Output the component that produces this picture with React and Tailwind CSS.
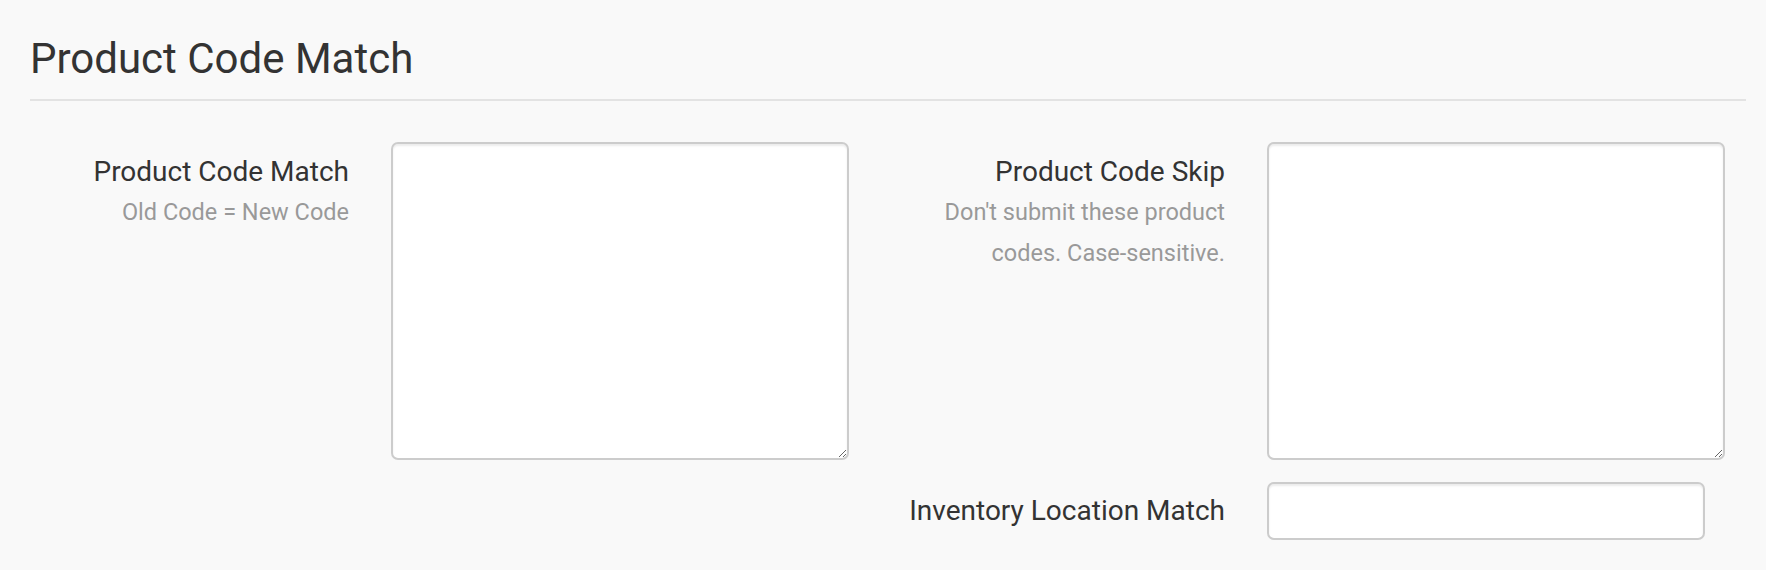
import React from "react";

const font = { fontFamily: "Roboto, 'Noto Sans', sans-serif" };

const fieldBox =
  "block bg-white border-2 border-[#cccccc] rounded-[7px] shadow-[inset_0_2px_2px_rgba(0,0,0,0.075)] outline-none";

const App = () => {
  return (
    <div className="min-h-screen bg-[#f9f9f9] pl-[30px] pr-[20px] pt-[36px] text-[#333333]" style={font}>
      {/* section header */}
      <div className="border-b-2 border-[#e3e3e3] pb-[17px]">
        <h2 className="text-[42px] leading-[46px] font-normal text-[#333333]">Product Code Match</h2>
      </div>

      <div className="flex mt-[41px]">
        {/* left group */}
        <div className="w-[319px] text-right pt-[10px]">
          <div className="text-[28px] leading-[40px] text-[#333333]">Product Code Match</div>
          <div className="text-[23.5px] leading-[41px] text-[#999999]">Old Code = New Code</div>
        </div>
        <div className="ml-[42px]">
          <textarea className={`${fieldBox} w-[458px] h-[318px]`} />
        </div>

        {/* right group */}
        <div className="w-[376px] text-right pt-[10px]">
          <div className="text-[28px] leading-[40px] text-[#333333]">Product Code Skip</div>
          <div className="text-[23.5px] leading-[41px] text-[#999999] pl-[60px]">
            Don't submit these product codes. Case-sensitive.
          </div>
        </div>
        <div className="ml-[42px]">
          <textarea className={`${fieldBox} w-[458px] h-[318px]`} />
        </div>
      </div>

      <div className="flex items-center mt-[22px]">
        <div className="w-[1195px] text-right text-[28px] leading-[40px] text-[#333333]">
          Inventory Location Match
        </div>
        <div className="ml-[42px]">
          <input type="text" className={`${fieldBox} w-[438px] h-[58px] px-[20px] text-[24px]`} />
        </div>
      </div>
    </div>
  );
};

export default App;
